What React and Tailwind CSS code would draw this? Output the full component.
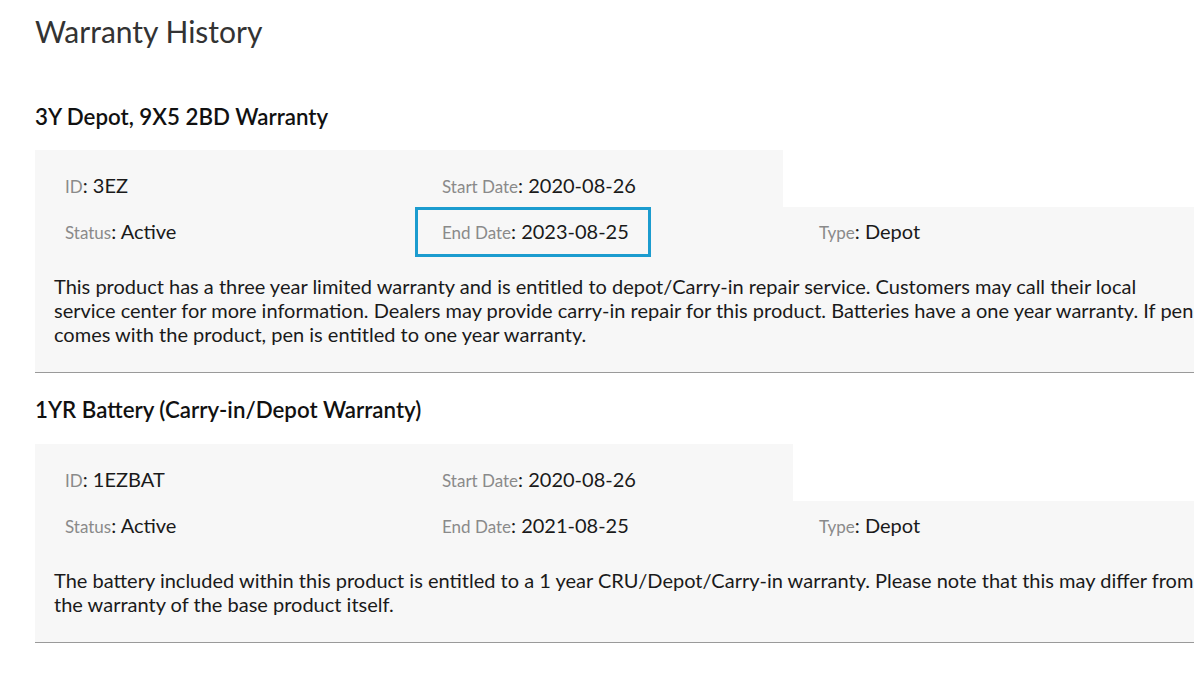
import React from 'react';

const warranties = [
  {
    title: '3Y Depot, 9X5 2BD Warranty',
    id: '3EZ',
    start: '2020-08-26',
    end: '2023-08-25',
    status: 'Active',
    type: 'Depot',
    topWidth: 'w-[748px]',
    titleGap: 'mb-[19px]',
    highlight: true,
    text: 'This product has a three year limited warranty and is entitled to depot/Carry-in repair service. Customers may call their local service center for more information. Dealers may provide carry-in repair for this product. Batteries have a one year warranty. If pen comes with the product, pen is entitled to one year warranty.'
  },
  {
    title: '1YR Battery (Carry-in/Depot Warranty)',
    id: '1EZBAT',
    start: '2020-08-26',
    end: '2021-08-25',
    status: 'Active',
    type: 'Depot',
    topWidth: 'w-[758px]',
    titleGap: 'mb-[20px]',
    highlight: false,
    text: 'The battery included within this product is entitled to a 1 year CRU/Depot/Carry-in warranty. Please note that this may differ from the warranty of the base product itself.'
  }
];

const Field = ({ label, value }) => (
  <span className="text-[20px] text-[#1a1a1a] whitespace-nowrap">
    <span className="text-[17px] text-[#8a8a8a]">{label}</span>: {value}
  </span>
);

const WarrantyCard = ({ w }) => (
  <section>
    <h2 className={`text-[22.3px] leading-[28px] font-semibold text-[#111] ${w.titleGap}`}>{w.title}</h2>
    <div className={`${w.topWidth} h-[57px] bg-[#f7f7f7] pl-[30px] pt-[23px] flex leading-[24px]`}>
      <div className="w-[377px] shrink-0"><Field label="ID" value={w.id} /></div>
      <div className="w-[300px] shrink-0"><Field label="Start Date" value={w.start} /></div>
    </div>
    <div className="bg-[#f7f7f7] border-b border-[#9a9a9a]">
      <div className="h-[50px] pl-[30px] flex items-center leading-[24px]">
        <div className="w-[377px] shrink-0"><Field label="Status" value={w.status} /></div>
        <div className="w-[377px] shrink-0">
          <div className={`-ml-[27px] w-[236px] h-[50px] pl-[24px] flex items-center border-[3px] ${w.highlight ? 'border-[#1c9ccf]' : 'border-transparent'}`}>
            <Field label="End Date" value={w.end} />
          </div>
        </div>
        <div className="w-[300px] shrink-0"><Field label="Type" value={w.type} /></div>
      </div>
      <p className="pl-[19px] pr-[10px] pt-[17px] pb-[26px] text-[20px] leading-[24px] text-[#1a1a1a]">{w.text}</p>
    </div>
  </section>
);

export default function App() {
  return (
    <div className="w-[1194px] min-h-[673px] overflow-hidden bg-white" style={{ fontFamily: 'Lato, "Open Sans", sans-serif' }}>
      <div className="w-[1175px] ml-[35px]">
        <h1 className="pt-[13px] text-[30px] leading-[36px] text-[#333]">Warranty History</h1>
        <div className="mt-[54px] flex flex-col gap-[23px]">
          {warranties.map(w => <WarrantyCard key={w.id} w={w} />)}
        </div>
      </div>
    </div>
  );
}
